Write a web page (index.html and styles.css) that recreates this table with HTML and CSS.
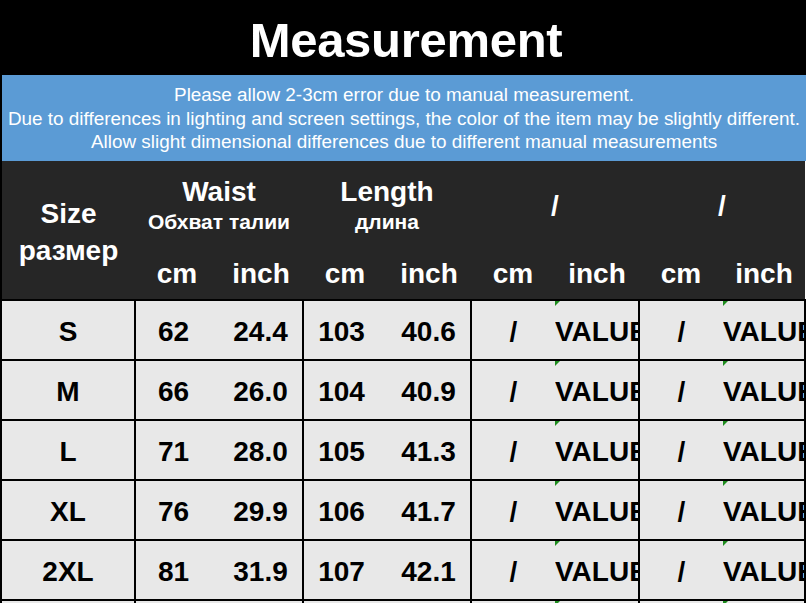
FILE: index.html
```html
<!DOCTYPE html>
<html>
<head>
<meta charset="utf-8">
<link rel="stylesheet" href="styles.css">
</head>
<body>
<div class="sheet">
  <div class="title">Measurement</div>
  <div class="notes">
    <div>Please allow 2-3cm error due to manual measurement.</div>
    <div>Due to differences in lighting and screen settings, the color of the item may be slightly different.</div>
    <div>Allow slight dimensional differences due to different manual measurements</div>
  </div>
  <table class="chart">
    <colgroup>
      <col class="c-size">
      <col class="c-sub"><col class="c-sub">
      <col class="c-sub"><col class="c-sub">
      <col class="c-sub"><col class="c-sub">
      <col class="c-sub"><col class="c-sub2">
    </colgroup>
    <thead>
      <tr class="h1">
        <th rowspan="2" class="hsize"><div>Size</div><div>размер</div></th>
        <th colspan="2"><div class="hname">Waist</div><div class="hru">Обхват талии</div></th>
        <th colspan="2"><div class="hname">Length</div><div class="hru">длина</div></th>
        <th colspan="2" class="hslash">/</th>
        <th colspan="2" class="hslash">/</th>
      </tr>
      <tr class="h2">
        <th>cm</th><th>inch</th>
        <th>cm</th><th>inch</th>
        <th>cm</th><th>inch</th>
        <th>cm</th><th>inch</th>
      </tr>
    </thead>
    <tbody>
      <tr><td class="sz">S</td><td class="l n">62</td><td class="r">24.4</td><td class="l n">103</td><td class="r">40.6</td><td class="l">/</td><td class="r err"><span>VALUE!</span></td><td class="l">/</td><td class="r err"><span>VALUE!</span></td></tr>
      <tr><td class="sz">M</td><td class="l n">66</td><td class="r">26.0</td><td class="l n">104</td><td class="r">40.9</td><td class="l">/</td><td class="r err"><span>VALUE!</span></td><td class="l">/</td><td class="r err"><span>VALUE!</span></td></tr>
      <tr><td class="sz">L</td><td class="l n">71</td><td class="r">28.0</td><td class="l n">105</td><td class="r">41.3</td><td class="l">/</td><td class="r err"><span>VALUE!</span></td><td class="l">/</td><td class="r err"><span>VALUE!</span></td></tr>
      <tr><td class="sz">XL</td><td class="l n">76</td><td class="r">29.9</td><td class="l n">106</td><td class="r">41.7</td><td class="l">/</td><td class="r err"><span>VALUE!</span></td><td class="l">/</td><td class="r err"><span>VALUE!</span></td></tr>
      <tr><td class="sz">2XL</td><td class="l n">81</td><td class="r">31.9</td><td class="l n">107</td><td class="r">42.1</td><td class="l">/</td><td class="r err"><span>VALUE!</span></td><td class="l">/</td><td class="r err"><span>VALUE!</span></td></tr>
      <tr><td class="sz">3XL</td><td class="l n">86</td><td class="r">33.9</td><td class="l n">108</td><td class="r">42.5</td><td class="l">/</td><td class="r err"><span>VALUE!</span></td><td class="l">/</td><td class="r err"><span>VALUE!</span></td></tr>
    </tbody>
  </table>
</div>
</body>
</html>
```

FILE: styles.css
```css
html, body {
  margin: 0;
  padding: 0;
  background: #ffffff;
  overflow: hidden;
}
body {
  width: 809px;
  height: 603px;
  font-family: "Liberation Sans", Arial, sans-serif;
}
.sheet {
  width: 806px;
}
.title {
  height: 75px;
  background: #000000;
  color: #ffffff;
  font-weight: bold;
  font-size: 49px;
  line-height: 80px;
  text-align: center;
  letter-spacing: -0.3px;
  padding-left: 6px;
}
.notes {
  height: 86px;
  box-sizing: border-box;
  background: #5b9bd5;
  border-left: 2px solid #000;
  color: #ffffff;
  font-size: 18.9px;
  line-height: 23.5px;
  padding-top: 8px;
  text-align: center;
  white-space: nowrap;
}
.chart {
  border-collapse: collapse;
  table-layout: fixed;
  width: 806px;
  margin-left: 0;
}
.c-size { width: 134px; }
.c-sub { width: 84px; }
.c-sub2 { width: 82px; }
.chart th {
  background: #262626;
  color: #ffffff;
  font-weight: bold;
  padding: 0;
  border: 0;
}
.chart .h1 th.hsize { border-left: 2px solid #000; }
.h1 { height: 89px; }
.h2 { height: 50px; }
.hsize {
  font-size: 28px;
  line-height: 37px;
  padding-top: 4px !important;
}
.hname {
  font-size: 28px;
  line-height: 32px;
}
.hru {
  font-size: 21px;
  line-height: 28px;
}
.hslash {
  font-size: 28px;
  font-weight: bold;
}
.h2 th {
  font-size: 28px;
  vertical-align: middle;
  padding-bottom: 1px !important;
}
.chart td {
  height: 55px;
  padding: 3px 0 0 0;
  background: #e8e8e8;
  border: 2px solid #000;
  font-size: 28px;
  font-weight: bold;
  text-align: center;
  color: #000;
  white-space: nowrap;
  overflow: hidden;
}
.chart td.l { border-right: 0; }
.chart td.r { border-left: 0; }
.chart td.n { padding-right: 8px; }
.chart td.err {
  position: relative;
  text-align: left;
}
.chart td.err span {
  display: block;
  overflow: hidden;
}
.chart td.err::before {
  content: "";
  position: absolute;
  left: 0;
  top: 0;
  border-top: 5px solid #1e8c1e;
  border-right: 5px solid transparent;
}
```
